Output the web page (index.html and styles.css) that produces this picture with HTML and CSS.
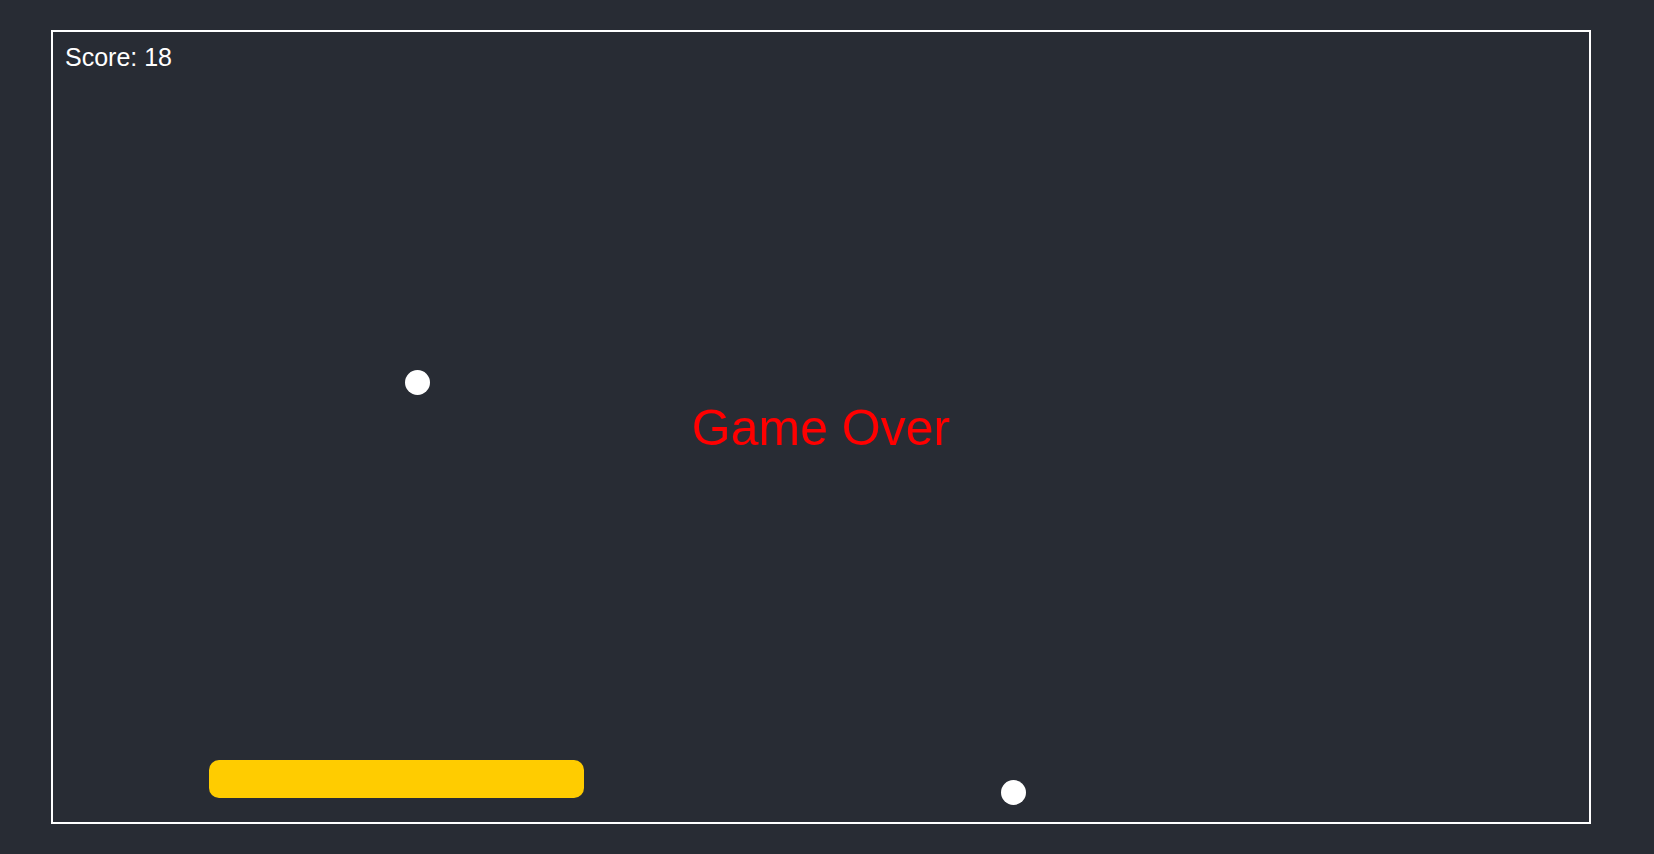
FILE: index.html
```html
<!DOCTYPE html>
<html>
<head>
<meta charset="utf-8">
<link rel="stylesheet" href="styles.css">
</head>
<body>
<div class="game">
  <div class="score">Score: 18</div>
  <div class="message">Game Over</div>
  <div class="ball ball-a"></div>
  <div class="ball ball-b"></div>
  <div class="paddle"></div>
</div>
</body>
</html>
```
FILE: styles.css
```css
html, body {
  margin: 0;
  padding: 0;
  background: #282c34;
  height: 100%;
  overflow: hidden;
}
body {
  padding: 30px 0 0 51px;
  box-sizing: border-box;
  font-family: "Liberation Sans", Arial, sans-serif;
}
.game {
  position: relative;
  width: 1536px;
  height: 790px;
  border: 2px solid #ffffff;
  box-sizing: content-box;
}
.score {
  color: #ffffff;
  font-size: 25px;
  line-height: 1;
  padding: 13px 0 0 12px;
}
.message {
  position: absolute;
  left: 0;
  right: 0;
  top: 371px;
  text-align: center;
  color: #ff0000;
  font-size: 50px;
  line-height: 1;
}
.ball {
  position: absolute;
  width: 25px;
  height: 25px;
  border-radius: 50%;
  background: #ffffff;
}
.ball-a {
  left: 352px;
  top: 338px;
}
.ball-b {
  left: 948px;
  top: 748px;
}
.paddle {
  position: absolute;
  left: 156px;
  top: 728px;
  width: 375px;
  height: 38px;
  border-radius: 10px;
  background: #ffcc00;
}
```
